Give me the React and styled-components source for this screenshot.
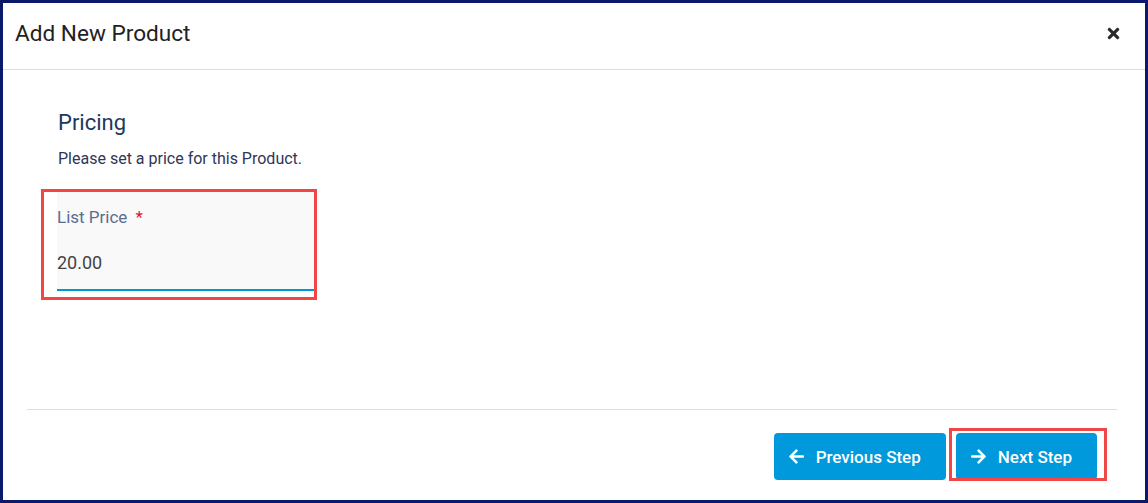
import React from 'react'
import styled, { createGlobalStyle } from 'styled-components'
import { FaTimes, FaArrowLeft, FaArrowRight } from 'react-icons/fa'

const GlobalStyle = createGlobalStyle`
  * { box-sizing: border-box; }
  body {
    margin: 0;
    background: #fff;
    font-family: Roboto, "Liberation Sans", Arial, sans-serif;
  }
`

function App() {
    return (
        <>
            <GlobalStyle />
            <Frame>
                <Header>
                    <Title>Add New Product</Title>
                    <Close aria-label="close"><FaTimes /></Close>
                </Header>
                <Body>
                    <SectionTitle>Pricing</SectionTitle>
                    <SectionHint>Please set a price for this Product.</SectionHint>
                    <Field>
                        <Label>List Price <Required>*</Required></Label>
                        <Value>20.00</Value>
                        <Highlight $inset="-1px -3px -11px -16px" />
                    </Field>
                </Body>
                <Footer>
                    <StepButton>
                        <FaArrowLeft />
                        Previous Step
                    </StepButton>
                    <StepButton>
                        <FaArrowRight />
                        Next Step
                        <Highlight $inset="-5px -10px -1px -7px" />
                    </StepButton>
                </Footer>
            </Frame>
        </>
    )
}

export default App

const Frame = styled.div`
    width: 1148px;
    height: 503px;
    border: 3px solid #0b196a;
    background: #fff;
    display: flex;
    flex-direction: column;
`

const Header = styled.div`
    height: 67px;
    flex-shrink: 0;
    border-bottom: 1px solid #dedede;
    display: flex;
    align-items: center;
    justify-content: space-between;
    padding: 0 23px 6px 12px;
`

const Title = styled.h1`
    margin: 0;
    font-size: 22.6px;
    font-weight: 400;
    color: #222;
`

const Close = styled.button`
    border: 0;
    background: none;
    padding: 0;
    color: #2b2b2b;
    font-size: 17px;
    display: flex;
    cursor: pointer;
    margin-top: 1px;
`

const Body = styled.div`
    flex: 1;
    margin: 0 28px 0 24px;
    padding: 40px 31px 0;
    border-bottom: 1px solid #dddde3;
`

const SectionTitle = styled.h2`
    margin: 0;
    font-size: 22px;
    line-height: 26px;
    font-weight: 400;
    color: #1d3860;
`

const SectionHint = styled.p`
    margin: 13px 0 0;
    font-size: 16px;
    line-height: 20px;
    color: #303657;
`

const Field = styled.div`
    position: relative;
    width: 257px;
    margin: 21px 0 0 -1px;
    background: #f9f9f9;
    padding: 16px 0 14px;
    border-bottom: 2px solid #0099d8;
`

const Label = styled.div`
    font-size: 17px;
    line-height: 22px;
    color: #5a6c90;
`

const Required = styled.span`
    color: #e0142c;
    margin-left: 4px;
`

const Value = styled.div`
    margin-top: 23px;
    font-size: 18px;
    line-height: 24px;
    color: #444;
`

const Highlight = styled.span`
    position: absolute;
    inset: ${p => p.$inset};
    border: 3px solid #f14646;
    pointer-events: none;
`

const Footer = styled.div`
    height: 90px;
    flex-shrink: 0;
    display: flex;
    justify-content: flex-end;
    gap: 10px;
    padding: 23px 48px 0 0;
`

const StepButton = styled.button`
    position: relative;
    height: 47px;
    border: 0;
    border-radius: 4px;
    background: #0099dc;
    color: #fff;
    font-family: Roboto, "Liberation Sans", Arial, sans-serif;
    font-size: 17px;
    font-weight: 500;
    display: flex;
    align-items: center;
    gap: 11px;
    padding: 0 25px 0 14px;
    cursor: pointer;

    svg {
        font-size: 17px;
    }
`
